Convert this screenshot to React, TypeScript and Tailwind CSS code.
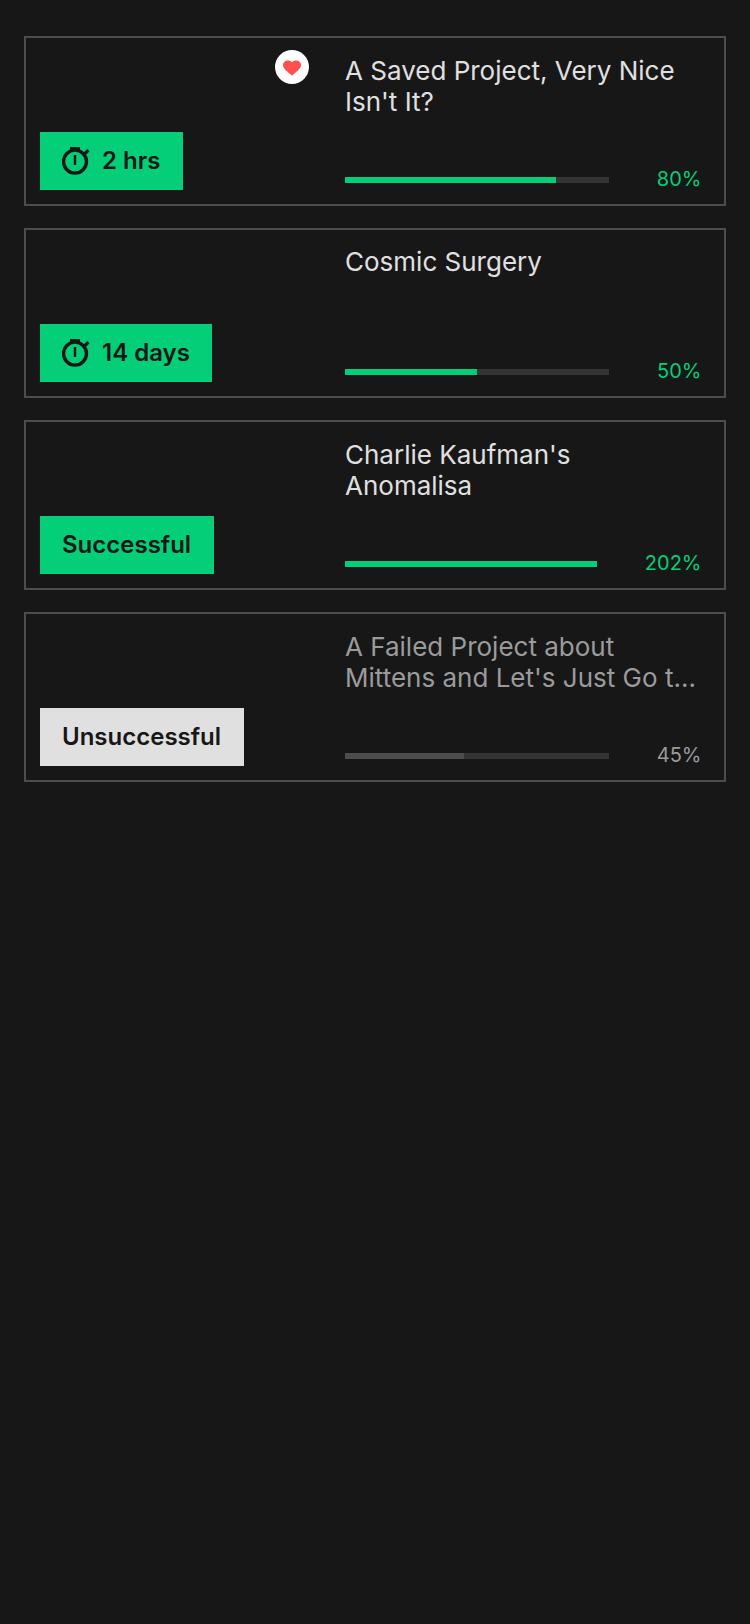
type Project = {
  title: string;
  badge: string;
  badgeWidth: string;
  live?: boolean;
  saved?: boolean;
  failed?: boolean;
  singleLine?: boolean;
  percent: number;
};

const projects: Project[] = [
  { title: "A Saved Project, Very Nice Isn't It?", badge: "2 hrs", badgeWidth: "w-[143px]", live: true, saved: true, percent: 80 },
  { title: "Cosmic Surgery", badge: "14 days", badgeWidth: "w-[172px]", live: true, singleLine: true, percent: 50 },
  { title: "Charlie Kaufman's Anomalisa", badge: "Successful", badgeWidth: "w-[174px]", percent: 202 },
  { title: "A Failed Project about Mittens and Let's Just Go t…", badge: "Unsuccessful", badgeWidth: "w-[204px]", failed: true, percent: 45 },
];

function Stopwatch() {
  return (
    <svg width="28" height="28" viewBox="0 0 28 28" className="mr-[12px] shrink-0" fill="none" stroke="#171717">
      <circle cx="13" cy="14.6" r="11.5" strokeWidth="3.4" />
      <path d="M8 0h10v3H8z" fill="#171717" stroke="none" />
      <path d="M13 8v10" strokeWidth="2.4" />
      <path d="M21.5 8l5-4.8" strokeWidth="3.2" />
    </svg>
  );
}

function SavedHeart() {
  return (
    <div className="flex h-[34px] w-[34px] items-center justify-center rounded-full bg-white">
      <svg width="18" height="16" viewBox="2 2.4 20 19.4" className="mt-[2px]" preserveAspectRatio="none">
        <path
          fill="#ff5050"
          d="M12 21.35l-1.45-1.32C5.4 15.36 2 12.28 2 8.5 2 5.42 4.42 3 7.5 3c1.74 0 3.41.81 4.5 2.09C13.09 3.81 14.76 3 16.5 3 19.58 3 22 5.42 22 8.5c0 3.78-3.4 6.86-8.55 11.54L12 21.35z"
        />
      </svg>
    </div>
  );
}

function ProjectCard({ project }: { project: Project }) {
  const { title, badge, badgeWidth, live, saved, failed, singleLine, percent } = project;
  return (
    <article className="flex h-[170px] border-2 border-[#4d4d4d]">
      <div className="flex w-[283px] flex-col justify-between pt-3 pb-[14px] pl-[14px]">
        <div className="flex h-[34px] justify-end">{saved && <SavedHeart />}</div>
        <div
          className={`flex h-[58px] items-center pl-[22px] text-[24px] font-semibold whitespace-nowrap text-[#171717] ${badgeWidth} ${failed ? "bg-[#e0e0e0]" : "bg-[#05ce78]"}`}
        >
          {live && <Stopwatch />}
          <span>{badge}</span>
        </div>
      </div>
      <div className={`ml-9 flex flex-1 flex-col justify-between pr-[22px] pb-[12px] ${singleLine ? "pt-4" : "pt-[17px]"}`}>
        <h2 className={`text-[26px] leading-[31px] ${failed ? "text-[#9b9b9b]" : "text-[#e0e0e0]"}`}>{title}</h2>
        <div className="flex items-center justify-between">
          <div className={`mt-[2px] h-[6px] bg-[#353535] ${percent >= 100 ? "w-[252px]" : "w-[264px]"}`}>
            <div
              className={`h-full ${failed ? "bg-[#4d4d4d]" : "bg-[#05ce78]"}`}
              style={{ width: `${Math.min(percent, 100)}%` }}
            />
          </div>
          <span className={`mr-[0.5px] text-[20px] leading-[26px] ${failed ? "text-[#9b9b9b]" : "text-[#05ce78]"}`}>{percent}%</span>
        </div>
      </div>
    </article>
  );
}

export default function App() {
  return (
    <main className="flex min-h-screen flex-col gap-[22px] bg-[#171717] px-6 pt-9 font-[Inter,'Liberation_Sans',sans-serif]">
      {projects.map((project) => (
        <ProjectCard key={project.title} project={project} />
      ))}
    </main>
  );
}
